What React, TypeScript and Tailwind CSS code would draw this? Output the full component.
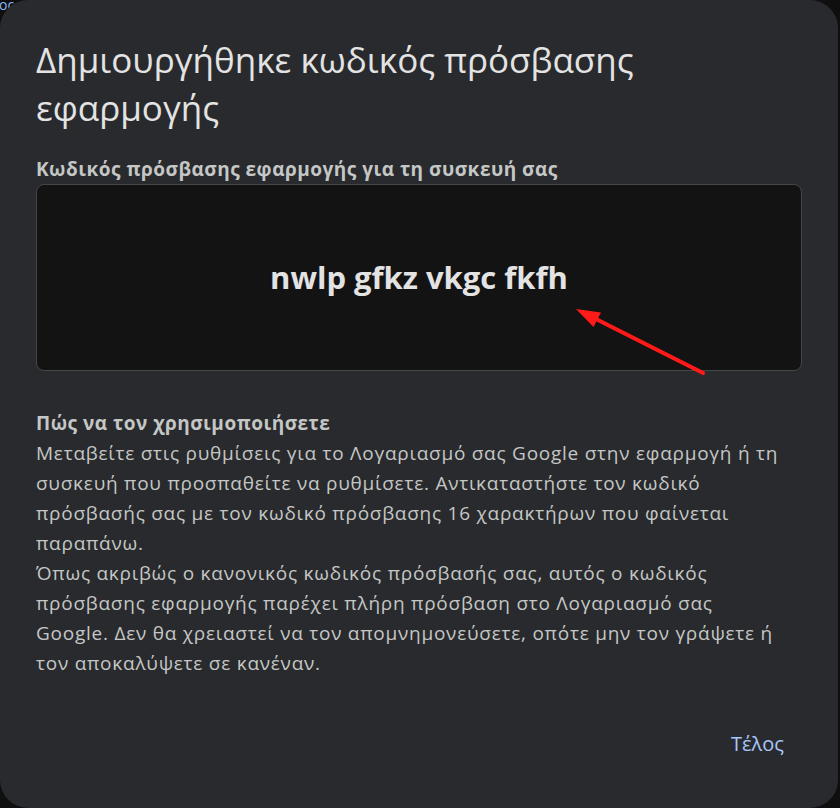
import React from 'react'

const bodyLines = [
  'Μεταβείτε στις ρυθμίσεις για το Λογαριασμό σας Google στην εφαρμογή ή τη',
  'συσκευή που προσπαθείτε να ρυθμίσετε. Αντικαταστήστε τον κωδικό',
  'πρόσβασής σας με τον κωδικό πρόσβασης 16 χαρακτήρων που φαίνεται',
  'παραπάνω.',
  'Όπως ακριβώς ο κανονικός κωδικός πρόσβασής σας, αυτός ο κωδικός',
  'πρόσβασης εφαρμογής παρέχει πλήρη πρόσβαση στο Λογαριασμό σας',
  'Google. Δεν θα χρειαστεί να τον απομνημονεύσετε, οπότε μην τον γράψετε ή',
  'τον αποκαλύψετε σε κανέναν.',
]

const App = () => {
  return (
    <div className="relative w-[840px] h-[808px] overflow-hidden bg-[#0f0f0f] font-['Open_Sans',sans-serif]">
      {/* page behind the dialog */}
      <span className="absolute left-[-1px] top-[-2px] text-[14px] leading-[14px] text-[#8ab4f8]">oc</span>

      <div className="relative z-10 w-[838px] h-[808px] rounded-[28px] bg-[#292a2d] px-[36px] pt-[36px] flex flex-col">
        <h1 className="text-[35px] leading-[48px] font-normal text-[#e3e3e3]">
          Δημιουργήθηκε κωδικός πρόσβασης
          <br />
          εφαρμογής
        </h1>

        <p className="mt-[25px] text-[19px] leading-[24px] font-bold tracking-[0.5px] text-[#c4c7c5]">
          Κωδικός πρόσβασης εφαρμογής για τη συσκευή σας
        </p>

        <div className="mt-[3px] h-[187px] rounded-[8px] border border-[#444746] bg-[#131313] flex items-center justify-center">
          <span className="text-[31px] font-bold text-[#e3e3e3]">nwlp gfkz vkgc fkfh</span>
        </div>

        <div className="mt-[37px] text-[19px] leading-[30px] tracking-[0.75px] text-[#c4c7c5]">
          <p className="font-bold tracking-[0.5px]">Πώς να τον χρησιμοποιήσετε</p>
          {bodyLines.map((line) => (
            <p key={line} className="whitespace-nowrap">{line}</p>
          ))}
        </div>

        <div className="mt-[51px] flex justify-end">
          <button className="px-[18px] text-[20px] leading-[30px] font-medium text-[#a8c7fa]">Τέλος</button>
        </div>
      </div>

      <svg className="absolute inset-0 z-20 pointer-events-none" width="840" height="808" viewBox="0 0 840 808">
        <line x1="703" y1="373" x2="592" y2="317" stroke="#ff1a1a" strokeWidth="4" strokeLinecap="round" />
        <polygon points="576,309 601,312.5 593.5,327" fill="#ff1a1a" />
      </svg>
    </div>
  )
}

export default App
